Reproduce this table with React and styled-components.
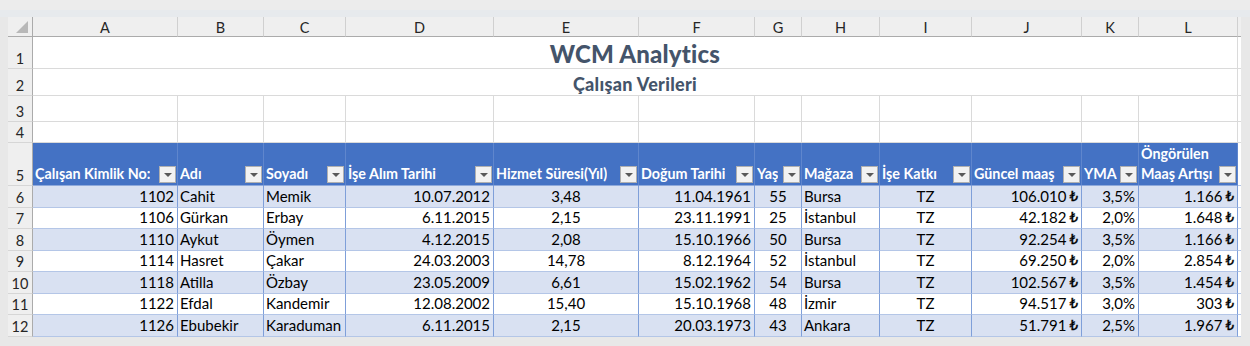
import React from "react";
import styled, { createGlobalStyle } from "styled-components";

const GlobalStyle = createGlobalStyle`
  body {
    margin: 0;
    background: #e8e8e8;
    font-family: Lato, "Liberation Sans", "DejaVu Sans", sans-serif;
  }
`;

const Frame = styled.div`
  height: 346px;
  box-sizing: border-box;
  padding: 17px 0 0 8px;
  background: linear-gradient(#ececec 0, #ececec 10px, #e7eaed 10px, #e7eaed 17px, #e8e8e8 17px);
  overflow: hidden;
`;

const Sheet = styled.div`
  display: grid;
  grid-template-columns: 25px 145px 86px 82px 148px 145px 116px 47px 78px 92px 110px 57px 99px 3px;
  grid-template-rows: 20px 32px 27px 26px 21px 43px 22px 21px 22px 21px 22px 21px 22px;
  font-size: 15px;
  color: #000;
`;

const Corner = styled.div`
  background: #efefef;
  border-right: 1px solid #ababab;
  border-bottom: 1px solid #ababab;
  box-sizing: border-box;
  display: flex;
  align-items: flex-end;
  justify-content: flex-end;
  padding: 0 4px 3px 0;
`;

const CornerMark = styled.div`
  width: 0;
  height: 0;
  border-left: 12px solid transparent;
  border-bottom: 12px solid #b8b8b8;
`;

const ColHead = styled.div`
  background: #efefef;
  border-right: 1px solid #d0d0d0;
  border-bottom: 1px solid #ababab;
  box-sizing: border-box;
  display: flex;
  align-items: center;
  justify-content: center;
  padding-top: 2px;
  color: #262626;
  font-size: 14.5px;
`;

const EdgeHead = styled.div`
  background: #efefef;
  border-bottom: 1px solid #ababab;
`;

const RowHead = styled.div`
  background: #efefef;
  border-right: 1px solid #ababab;
  border-bottom: 1px solid #d6d6d6;
  box-sizing: border-box;
  display: flex;
  align-items: flex-end;
  justify-content: center;
  padding-bottom: 1px;
  color: #262626;
  font-size: 14.5px;
`;

const TitleCell = styled.div`
  grid-column: span 12;
  background: #fff;
  border-right: 1px solid #dadada;
  border-bottom: 1px solid #dadada;
  box-sizing: border-box;
  display: flex;
  align-items: flex-end;
  justify-content: center;
  line-height: 1;
  padding-bottom: ${(p) => p.$pad}px;
  color: #44546a;
  font-weight: 900;
  font-size: ${(p) => p.$size}px;
  letter-spacing: ${(p) => p.$spacing}px;
`;

const Blank = styled.div`
  background: #fff;
  border-right: 1px solid #dadada;
  border-bottom: 1px solid #dadada;
  box-sizing: border-box;
`;

const Edge = styled.div`
  background: #fff;
  border-bottom: 1px solid ${(p) => (p.$blue ? "#b4c6e7" : "#dadada")};
`;

const HeadCell = styled.div`
  background: #4472c4;
  border-right: 1px solid #5f86cd;
  border-bottom: 1px solid #8ea9db;
  box-sizing: border-box;
  display: flex;
  align-items: flex-end;
  justify-content: space-between;
  padding: 0 1px 1px 2px;
  color: #fff;
  font-weight: 700;
  font-size: 14.3px;
  gap: 3px;
`;

const HeadText = styled.span`
  line-height: 20px;
  white-space: ${(p) => (p.$wrap ? "normal" : "nowrap")};
  overflow: hidden;
`;

const FilterButton = styled.div`
  flex: none;
  width: 17px;
  height: 17px;
  box-sizing: border-box;
  background: #f2f2f2;
  border: 1px solid #b0b0b0;
  display: flex;
  align-items: center;
  justify-content: center;
  margin-bottom: 1px;
`;

const Arrow = styled.div`
  width: 0;
  height: 0;
  border-left: 4px solid transparent;
  border-right: 4px solid transparent;
  border-top: 4px solid #595959;
`;

const Cell = styled.div`
  background: ${(p) => (p.$band ? "#d9e1f2" : "#fff")};
  border-right: 1px solid #7f9fd9;
  border-bottom: 1px solid #b4c6e7;
  box-sizing: border-box;
  display: flex;
  align-items: flex-end;
  justify-content: ${(p) =>
    p.$align === "right" ? "flex-end" : p.$align === "center" ? "center" : "flex-start"};
  padding: 0 ${(p) => (p.$align === "right" ? 3 : 2)}px 1px 2px;
  white-space: nowrap;
  overflow: hidden;
  line-height: 20px;
`;

const Lira = styled.span`
  font-family: "DejaVu Sans", sans-serif;
  font-size: 13.5px;
  margin-left: 3px;
  -webkit-text-stroke: 0.3px #000;
`;

const columns = [
  { letter: "A", title: "Çalışan Kimlik No:", align: "right" },
  { letter: "B", title: "Adı", align: "left" },
  { letter: "C", title: "Soyadı", align: "left" },
  { letter: "D", title: "İşe Alım Tarihi", align: "right" },
  { letter: "E", title: "Hizmet Süresi(Yıl)", align: "center" },
  { letter: "F", title: "Doğum Tarihi", align: "right" },
  { letter: "G", title: "Yaş", align: "center" },
  { letter: "H", title: "Mağaza", align: "left" },
  { letter: "I", title: "İşe Katkı", align: "center" },
  { letter: "J", title: "Güncel maaş", align: "right", lira: true },
  { letter: "K", title: "YMA", align: "right" },
  { letter: "L", title: "Öngörülen Maaş Artışı", align: "right", lira: true, wrap: true },
];

const employees = [
  ["1102", "Cahit", "Memik", "10.07.2012", "3,48", "11.04.1961", "55", "Bursa", "TZ", "106.010", "3,5%", "1.166"],
  ["1106", "Gürkan", "Erbay", "6.11.2015", "2,15", "23.11.1991", "25", "İstanbul", "TZ", "42.182", "2,0%", "1.648"],
  ["1110", "Aykut", "Öymen", "4.12.2015", "2,08", "15.10.1966", "50", "Bursa", "TZ", "92.254", "3,5%", "1.166"],
  ["1114", "Hasret", "Çakar", "24.03.2003", "14,78", "8.12.1964", "52", "İstanbul", "TZ", "69.250", "2,0%", "2.854"],
  ["1118", "Atilla", "Özbay", "23.05.2009", "6,61", "15.02.1962", "54", "Bursa", "TZ", "102.567", "3,5%", "1.454"],
  ["1122", "Efdal", "Kandemir", "12.08.2002", "15,40", "15.10.1968", "48", "İzmir", "TZ", "94.517", "3,0%", "303"],
  ["1126", "Ebubekir", "Karaduman", "6.11.2015", "2,15", "20.03.1973", "43", "Ankara", "TZ", "51.791", "2,5%", "1.967"],
];

function App() {
  return (
    <Frame>
      <GlobalStyle />
      <Sheet>
        <Corner>
          <CornerMark />
        </Corner>
        {columns.map((col) => (
          <ColHead key={col.letter}>{col.letter}</ColHead>
        ))}
        <EdgeHead />

        <RowHead>1</RowHead>
        <TitleCell $size={24} $pad={2} $spacing={0.2}>WCM Analytics</TitleCell>
        <Edge />

        <RowHead>2</RowHead>
        <TitleCell $size={18} $pad={2} $spacing={0.3}>Çalışan Verileri</TitleCell>
        <Edge />

        {[3, 4].map((n) => (
          <React.Fragment key={n}>
            <RowHead>{n}</RowHead>
            {columns.map((col) => (
              <Blank key={col.letter} />
            ))}
            <Edge />
          </React.Fragment>
        ))}

        <RowHead>5</RowHead>
        {columns.map((col) => (
          <HeadCell key={col.letter}>
            <HeadText $wrap={col.wrap}>{col.title}</HeadText>
            <FilterButton>
              <Arrow />
            </FilterButton>
          </HeadCell>
        ))}
        <Edge $blue />

        {employees.map((row, i) => (
          <React.Fragment key={row[0]}>
            <RowHead>{i + 6}</RowHead>
            {row.map((value, j) => (
              <Cell key={j} $align={columns[j].align} $band={i % 2 === 0}>
                {value}
                {columns[j].lira && <Lira>₺</Lira>}
              </Cell>
            ))}
            <Edge $blue />
          </React.Fragment>
        ))}
      </Sheet>
    </Frame>
  );
}

export default App;
